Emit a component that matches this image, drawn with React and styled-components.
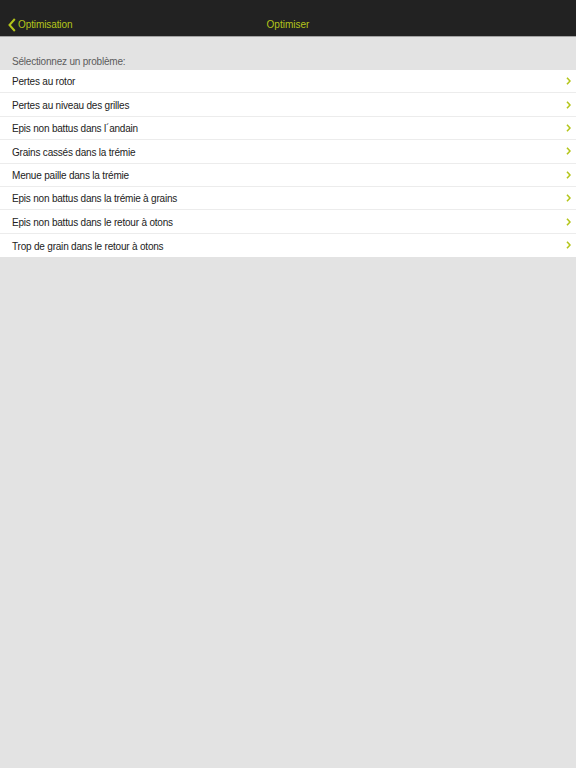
import React from 'react';
import styled, { createGlobalStyle } from 'styled-components';

const GlobalStyle = createGlobalStyle`
  html, body {
    margin: 0;
    padding: 0;
    background: #e3e3e3;
    font-family: "Liberation Sans", Arial, sans-serif;
  }
`;

const problems = [
  'Pertes au rotor',
  'Pertes au niveau des grilles',
  'Epis non battus dans l´andain',
  'Grains cassés dans la trémie',
  'Menue paille dans la trémie',
  'Epis non battus dans la trémie à grains',
  'Epis non battus dans le retour à otons',
  'Trop de grain dans le retour à otons',
];

const App = () => {
  return (
    <Page>
      <GlobalStyle />
      <NavBar>
        <BackButton>
          <svg width="8" height="14" viewBox="0 0 8 14">
            <path d="M6.8 1 L1.5 7 L6.8 13" fill="none" stroke="#b4c51a" strokeWidth="2" />
          </svg>
          <span>Optimisation</span>
        </BackButton>
        <Title>Optimiser</Title>
      </NavBar>
      <SectionLabel>Sélectionnez un problème:</SectionLabel>
      <List>
        {problems.map((p) => (
          <Row key={p}>
            <RowText>{p}</RowText>
            <svg width="5" height="8" viewBox="0 0 5 8">
              <path d="M1 0.8 L4 4 L1 7.2" fill="none" stroke="#b4c51a" strokeWidth="1.6" />
            </svg>
          </Row>
        ))}
      </List>
    </Page>
  );
};

export default App;

const Page = styled.div`
  width: 576px;
  min-height: 768px;
  background: #e3e3e3;
`;

const NavBar = styled.div`
  height: 37px;
  box-sizing: border-box;
  padding: 13px 8px 0;
  background: #222222;
  border-bottom: 1px solid #a3a3a3;
  display: flex;
  align-items: center;
  position: relative;
`;

const BackButton = styled.div`
  display: flex;
  align-items: center;
  gap: 2px;
  color: #b4c51a;
  font-size: 10px;
  letter-spacing: -0.1px;
`;

const Title = styled.div`
  position: absolute;
  left: 0;
  right: 0;
  top: 13px;
  bottom: 0;
  display: flex;
  align-items: center;
  justify-content: center;
  color: #b4c51a;
  font-size: 10px;
  pointer-events: none;
`;

const SectionLabel = styled.div`
  padding: 19px 12px 0;
  height: 14px;
  font-size: 10px;
  letter-spacing: -0.2px;
  color: #5c5c5c;
`;

const List = styled.div`
  background: #fff;
`;

const Row = styled.div`
  height: 22.4px;
  border-bottom: 1px solid #ececec;
  display: flex;
  align-items: center;
  justify-content: space-between;
  padding: 0 5px 0 12px;

  &:last-child {
    border-bottom: none;
    height: 23.4px;
  }
`;

const RowText = styled.span`
  font-size: 10px;
  letter-spacing: -0.2px;
  color: #222;
  padding-top: 1.5px;
`;
